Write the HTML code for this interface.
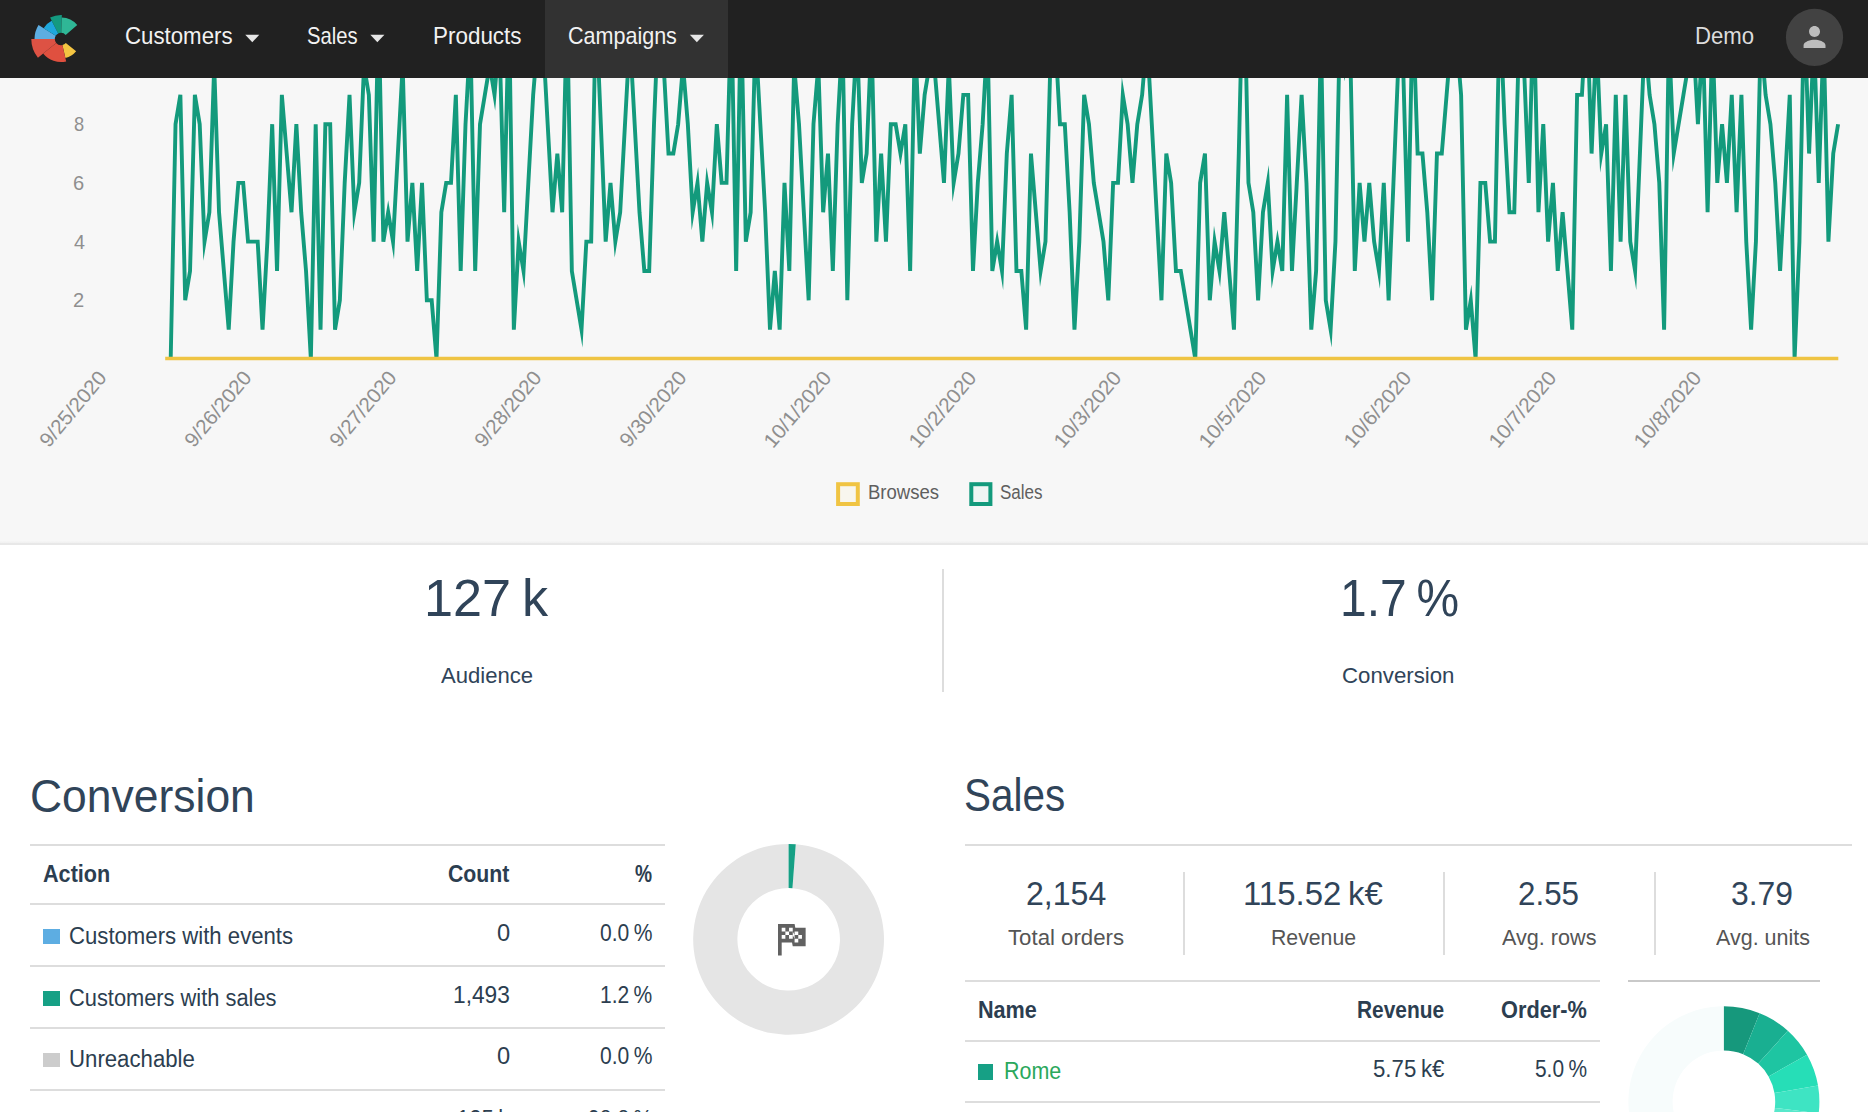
<!DOCTYPE html>
<html lang="en"><head><meta charset="utf-8"><title>Campaign</title>
<style>
html,body{margin:0;padding:0;}
body{width:1868px;height:1112px;overflow:hidden;background:#fff;position:relative;font-family:"Liberation Sans", sans-serif;}
.t{position:absolute;white-space:nowrap;line-height:1;transform-origin:0 0;}
.r{position:absolute;}
svg{position:absolute;left:0;top:0;overflow:hidden;}
#chartbg{position:absolute;left:0;top:0;width:1868px;height:543.4px;background:linear-gradient(#f7f7f7,#f7f7f7 540.6px,#efefef 543.4px);border-bottom:2px solid #e8e8e8;}
#nav{position:absolute;left:0;top:0;width:1868px;height:78.2px;background:#212121;}
#act{position:absolute;left:545px;top:0;width:182.5px;height:78.2px;background:#323232;}
</style></head><body>
<div id="chartbg"></div>
<svg width="1868" height="1112" viewBox="0 0 1868 1112">
<polyline points="170.7,359 175.53,124.2 180.37,94.85 185.2,300.3 190.03,270.95 194.86,94.85 199.7,124.2 204.53,241.6 209.36,212.25 214.2,65.5 219.03,212.25 223.86,270.95 228.7,329.65 233.53,241.6 238.36,182.9 243.19,182.9 248.03,241.6 252.86,241.6 257.69,241.6 262.53,329.65 267.36,241.6 272.19,124.2 277.03,270.95 281.86,94.85 286.69,153.55 291.52,212.25 296.36,124.2 301.19,212.25 306.02,270.95 310.86,359 315.69,124.2 320.52,329.65 325.36,124.2 330.19,124.2 335.02,329.65 339.86,300.3 344.69,182.9 349.52,94.85 354.35,212.25 359.19,182.9 364.02,65.5 368.85,94.85 373.69,241.6 378.52,6.8 383.35,241.6 388.19,212.25 393.02,241.6 397.85,153.55 402.68,65.5 407.52,241.6 412.35,182.9 417.18,270.95 422.02,182.9 426.85,300.3 431.68,300.3 436.51,359 441.35,212.25 446.18,182.9 451.01,182.9 455.85,94.85 460.68,270.95 465.51,124.2 470.35,36.15 475.18,270.95 480.01,124.2 484.85,94.85 489.68,65.5 494.51,94.85 499.34,36.15 504.18,212.25 509.01,6.8 513.84,329.65 518.68,241.6 523.51,270.95 528.34,182.9 533.17,94.85 538.01,36.15 542.84,36.15 547.67,124.2 552.51,212.25 557.34,153.55 562.17,212.25 567.01,6.8 571.84,270.95 576.67,300.3 581.5,329.65 586.34,241.6 591.17,241.6 596,6.8 600.84,124.2 605.67,241.6 610.5,182.9 615.34,241.6 620.17,212.25 625,124.2 629.84,36.15 634.67,124.2 639.5,212.25 644.33,270.95 649.17,270.95 654,124.2 658.83,6.8 663.67,65.5 668.5,153.55 673.33,153.55 678.16,124.2 683,65.5 687.83,124.2 692.66,212.25 697.5,182.9 702.33,241.6 707.16,182.9 712,212.25 716.83,124.2 721.66,182.9 726.5,182.9 731.33,6.8 736.16,270.95 740.99,6.8 745.83,241.6 750.66,212.25 755.49,36.15 760.33,124.2 765.16,212.25 769.99,329.65 774.83,270.95 779.66,329.65 784.49,182.9 789.32,270.95 794.16,65.5 798.99,124.2 803.82,212.25 808.66,300.3 813.49,124.2 818.32,65.5 823.15,212.25 827.99,153.55 832.82,270.95 837.65,124.2 842.49,36.15 847.32,300.3 852.15,124.2 856.99,36.15 861.82,182.9 866.65,153.55 871.49,36.15 876.32,241.6 881.15,153.55 885.98,241.6 890.82,124.2 895.65,124.2 900.48,153.55 905.32,124.2 910.15,270.95 914.98,36.15 919.82,153.55 924.65,94.85 929.48,65.5 934.31,65.5 939.15,124.2 943.98,182.9 948.81,65.5 953.65,182.9 958.48,153.55 963.31,94.85 968.14,94.85 972.98,270.95 977.81,182.9 982.64,124.2 987.48,36.15 992.31,270.95 997.14,241.6 1001.98,270.95 1006.81,153.55 1011.64,94.85 1016.47,270.95 1021.31,270.95 1026.14,329.65 1030.97,153.55 1035.81,212.25 1040.64,270.95 1045.47,241.6 1050.31,65.5 1055.14,36.15 1059.97,124.2 1064.81,124.2 1069.64,212.25 1074.47,329.65 1079.3,241.6 1084.14,94.85 1088.97,124.2 1093.8,182.9 1098.64,212.25 1103.47,241.6 1108.3,300.3 1113.13,182.9 1117.97,182.9 1122.8,94.85 1127.63,124.2 1132.47,182.9 1137.3,124.2 1142.13,94.85 1146.97,36.15 1151.8,124.2 1156.63,212.25 1161.46,300.3 1166.3,153.55 1171.13,182.9 1175.96,270.95 1180.8,270.95 1185.63,300.3 1190.46,329.65 1195.3,359 1200.13,182.9 1204.96,153.55 1209.8,300.3 1214.63,241.6 1219.46,270.95 1224.29,212.25 1229.13,270.95 1233.96,329.65 1238.79,153.55 1243.63,-51.9 1248.46,182.9 1253.29,212.25 1258.12,300.3 1262.96,212.25 1267.79,182.9 1272.62,270.95 1277.46,241.6 1282.29,270.95 1287.12,94.85 1291.96,270.95 1296.79,182.9 1301.62,94.85 1306.46,182.9 1311.29,329.65 1316.12,270.95 1320.95,36.15 1325.79,300.3 1330.62,329.65 1335.45,241.6 1340.29,6.8 1345.12,65.5 1349.95,36.15 1354.79,270.95 1359.62,182.9 1364.45,241.6 1369.28,182.9 1374.12,241.6 1378.95,270.95 1383.78,182.9 1388.62,300.3 1393.45,182.9 1398.28,65.5 1403.12,65.5 1407.95,241.6 1412.78,6.8 1417.61,153.55 1422.45,153.55 1427.28,212.25 1432.11,300.3 1436.95,153.55 1441.78,153.55 1446.61,94.85 1451.45,36.15 1456.28,36.15 1461.11,94.85 1465.94,329.65 1470.78,300.3 1475.61,359 1480.44,182.9 1485.28,182.9 1490.11,241.6 1494.94,241.6 1499.78,6.8 1504.61,124.2 1509.44,212.25 1514.27,212.25 1519.11,36.15 1523.94,65.5 1528.77,182.9 1533.61,6.8 1538.44,212.25 1543.27,124.2 1548.11,241.6 1552.94,182.9 1557.77,270.95 1562.6,212.25 1567.44,270.95 1572.27,329.65 1577.1,94.85 1581.94,94.85 1586.77,6.8 1591.6,153.55 1596.44,36.15 1601.27,153.55 1606.1,124.2 1610.93,270.95 1615.77,94.85 1620.6,241.6 1625.43,94.85 1630.27,241.6 1635.1,270.95 1639.93,153.55 1644.77,36.15 1649.6,94.85 1654.43,124.2 1659.26,182.9 1664.1,329.65 1668.93,36.15 1673.76,153.55 1678.6,124.2 1683.43,94.85 1688.26,65.5 1693.1,36.15 1697.93,124.2 1702.76,36.15 1707.59,212.25 1712.43,36.15 1717.26,182.9 1722.09,124.2 1726.93,182.9 1731.76,94.85 1736.59,212.25 1741.43,94.85 1746.26,241.6 1751.09,329.65 1755.92,241.6 1760.76,36.15 1765.59,94.85 1770.42,124.2 1775.26,182.9 1780.09,270.95 1784.92,182.9 1789.76,94.85 1794.59,359 1799.42,241.6 1804.25,6.8 1809.09,153.55 1813.92,36.15 1818.75,182.9 1823.59,36.15 1828.42,241.6 1833.25,153.55 1838.09,124.2" fill="none" stroke="#139a7c" stroke-width="3.9" stroke-linejoin="miter" stroke-miterlimit="10"/>
<path d="M165.2,358.5H1838.3" stroke="#efc443" stroke-width="3.5" fill="none"/>
<rect x="838.1" y="484.2" width="19.7" height="19.8" fill="#f8f6ee" stroke="#f0c443" stroke-width="4"/>
<rect x="971.3" y="484.2" width="19.1" height="19.8" fill="#eef5f3" stroke="#139a7c" stroke-width="4"/>
<path d="M795.75,844.17A95.4,95.4 0 1 1 788.60,843.90L788.60,888.00A51.3,51.3 0 1 0 792.45,888.14Z" fill="#e5e5e5"/><path d="M788.60,843.90A95.4,95.4 0 0 1 795.75,844.17L792.45,888.14A51.3,51.3 0 0 0 788.60,888.00Z" fill="#16a085"/>
<g transform="translate(768.8,916.7) scale(1.842)"><path d="M14.4,6H20V16H13L12.6,14H7V21H5V4H14L14.4,6M14,14H16V12H18V10H16V8H14V10L13,8V6H11V8H9V6H7V8H9V10H7V12H9V10H11V12H13V10L14,12V14M11,10V8H13V10H11M14,10H16V12H14V10Z" fill="#616161"/></g>
<path d="M1801.16,1157.83A95.5,95.5 0 1 1 1723.73,1006.20L1723.81,1050.40A51.3,51.3 0 1 0 1765.40,1131.85Z" fill="#f7fcfc"/><path d="M1723.90,1006.20A95.5,95.5 0 0 1 1759.67,1013.15L1743.12,1054.14A51.3,51.3 0 0 0 1723.90,1050.40Z" fill="#16987c"/><path d="M1759.67,1013.15A95.5,95.5 0 0 1 1787.80,1030.73L1758.23,1063.58A51.3,51.3 0 0 0 1743.12,1054.14Z" fill="#19af91"/><path d="M1787.80,1030.73A95.5,95.5 0 0 1 1807.02,1054.67L1768.55,1076.44A51.3,51.3 0 0 0 1758.23,1063.58Z" fill="#1ec5a2"/><path d="M1807.02,1054.67A95.5,95.5 0 0 1 1818.03,1085.61L1774.47,1093.06A51.3,51.3 0 0 0 1768.55,1076.44Z" fill="#26deb7"/><path d="M1818.03,1085.61A95.5,95.5 0 0 1 1818.69,1113.34L1774.82,1107.95A51.3,51.3 0 0 0 1774.47,1093.06Z" fill="#3ee4c3"/><path d="M1818.69,1113.34A95.5,95.5 0 0 1 1812.45,1137.47L1771.46,1120.92A51.3,51.3 0 0 0 1774.82,1107.95Z" fill="#58e8cb"/><path d="M1812.45,1137.47A95.5,95.5 0 0 1 1801.16,1157.83L1765.40,1131.85A51.3,51.3 0 0 0 1771.46,1120.92Z" fill="#72ecd3"/>
</svg>
<span class="t" style="left:12.25px;top:364px;font-size:20.3px;color:#8f8f8f;transform-origin:89.95px 10px;transform:rotate(-50deg) scaleX(1.0150);">9/25/2020</span><span class="t" style="left:157.27px;top:364px;font-size:20.3px;color:#8f8f8f;transform-origin:89.95px 10px;transform:rotate(-50deg) scaleX(1.0150);">9/26/2020</span><span class="t" style="left:302.29px;top:364px;font-size:20.3px;color:#8f8f8f;transform-origin:89.95px 10px;transform:rotate(-50deg) scaleX(1.0150);">9/27/2020</span><span class="t" style="left:447.31px;top:364px;font-size:20.3px;color:#8f8f8f;transform-origin:89.95px 10px;transform:rotate(-50deg) scaleX(1.0150);">9/28/2020</span><span class="t" style="left:592.33px;top:364px;font-size:20.3px;color:#8f8f8f;transform-origin:89.95px 10px;transform:rotate(-50deg) scaleX(1.0150);">9/30/2020</span><span class="t" style="left:737.35px;top:364px;font-size:20.3px;color:#8f8f8f;transform-origin:89.95px 10px;transform:rotate(-50deg) scaleX(1.0265);">10/1/2020</span><span class="t" style="left:882.37px;top:364px;font-size:20.3px;color:#8f8f8f;transform-origin:89.95px 10px;transform:rotate(-50deg) scaleX(1.0265);">10/2/2020</span><span class="t" style="left:1027.39px;top:364px;font-size:20.3px;color:#8f8f8f;transform-origin:89.95px 10px;transform:rotate(-50deg) scaleX(1.0265);">10/3/2020</span><span class="t" style="left:1172.41px;top:364px;font-size:20.3px;color:#8f8f8f;transform-origin:89.95px 10px;transform:rotate(-50deg) scaleX(1.0265);">10/5/2020</span><span class="t" style="left:1317.43px;top:364px;font-size:20.3px;color:#8f8f8f;transform-origin:89.95px 10px;transform:rotate(-50deg) scaleX(1.0265);">10/6/2020</span><span class="t" style="left:1462.45px;top:364px;font-size:20.3px;color:#8f8f8f;transform-origin:89.95px 10px;transform:rotate(-50deg) scaleX(1.0265);">10/7/2020</span><span class="t" style="left:1607.47px;top:364px;font-size:20.3px;color:#8f8f8f;transform-origin:89.95px 10px;transform:rotate(-50deg) scaleX(1.0265);">10/8/2020</span>
<div id="nav"><div id="act"></div></div>
<svg width="1868" height="79" viewBox="0 0 1868 79">
<path d="M50.10,17.62A24.0,24.0 0 0 1 61.84,15.01L61.22,32.80A6.2,6.2 0 0 0 58.19,33.48Z" fill="#149a80"/><path d="M61.75,17.51A21.5,21.5 0 0 1 77.23,24.89L65.68,34.93A6.2,6.2 0 0 0 61.22,32.80Z" fill="#2fb796"/><path d="M76.15,51.27A19.5,19.5 0 0 1 65.39,58.00L62.39,45.04A6.2,6.2 0 0 0 65.82,42.90Z" fill="#f4c542"/><path d="M66.17,61.41A23.0,23.0 0 0 1 43.13,53.47L56.18,42.90A6.2,6.2 0 0 0 62.39,45.04Z" fill="#e0503f"/><path d="M37.92,57.69A29.7,29.7 0 0 1 31.30,39.00L54.80,39.00A6.2,6.2 0 0 0 56.18,42.90Z" fill="#dd5244"/><path d="M34.50,39.00A26.5,26.5 0 0 1 38.53,24.96L55.74,35.71A6.2,6.2 0 0 0 54.80,39.00Z" fill="#5dade2"/><path d="M43.62,28.14A20.5,20.5 0 0 1 51.69,20.73L58.19,33.48A6.2,6.2 0 0 0 55.74,35.71Z" fill="#1ea7dc"/>
<path d="M245.3,34.8H259.3L252.3,42.2Z" fill="#e6e6e6"/><path d="M370.3,34.8H384.4L377.35,42.2Z" fill="#e6e6e6"/><path d="M689.8,34.8H703.9L696.8499999999999,42.2Z" fill="#e6e6e6"/>
<circle cx="1814.5" cy="37.3" r="28.6" fill="#424242"/>
<g transform="translate(1798.1,20.6) scale(1.37)"><path d="M12 12c2.21 0 4-1.79 4-4s-1.79-4-4-4-4 1.79-4 4 1.79 4 4 4zm0 2c-2.67 0-8 1.34-8 4v2h16v-2c0-2.66-5.33-4-8-4z" fill="#bdbdbd"/></g>
</svg>
<div class="r" style="left:30.3px;top:843.5px;width:634.6px;height:2px;background:#dddddd"></div><div class="r" style="left:30.3px;top:903.3px;width:634.6px;height:2px;background:#dddddd"></div><div class="r" style="left:30.3px;top:965px;width:634.6px;height:2px;background:#dddddd"></div><div class="r" style="left:30.3px;top:1026.9px;width:634.6px;height:2px;background:#dddddd"></div><div class="r" style="left:30.3px;top:1089px;width:634.6px;height:2px;background:#dddddd"></div><div class="r" style="left:965.3px;top:843.5px;width:886.6px;height:2px;background:#dddddd"></div><div class="r" style="left:1182.9px;top:872px;width:2px;height:82.5px;background:#dddddd"></div><div class="r" style="left:1442.8px;top:872px;width:2px;height:82.5px;background:#dddddd"></div><div class="r" style="left:1653.9px;top:872px;width:2px;height:82.5px;background:#dddddd"></div><div class="r" style="left:965.3px;top:979.9px;width:634.7px;height:2px;background:#dddddd"></div><div class="r" style="left:965.3px;top:1039.5px;width:634.7px;height:2px;background:#dddddd"></div><div class="r" style="left:965.3px;top:1101.3px;width:634.7px;height:2px;background:#dddddd"></div><div class="r" style="left:1628.1px;top:980px;width:191.5px;height:2px;background:#c9c9c9"></div><div class="r" style="left:941.95px;top:568.6px;width:2.2px;height:123.9px;background:#dddddd"></div><div class="r" style="left:42.7px;top:929.3px;width:17.2px;height:14.7px;background:#5dade2"></div><div class="r" style="left:42.7px;top:990.9px;width:17.2px;height:14.7px;background:#16a085"></div><div class="r" style="left:42.7px;top:1052.6px;width:17.2px;height:14.6px;background:#cccccc"></div><div class="r" style="left:978.3px;top:1063.9px;width:14.8px;height:16px;background:#16a085"></div>
<span class="t" style="left:125.24px;top:25.3px;font-size:23.2px;color:#f2f2f2;transform:scaleX(0.9592);">Customers</span><span class="t" style="left:306.93px;top:25.3px;font-size:23.2px;color:#f2f2f2;transform:scaleX(0.8722);">Sales</span><span class="t" style="left:432.73px;top:25.3px;font-size:23.2px;color:#f2f2f2;transform:scaleX(0.9676);">Products</span><span class="t" style="left:568.07px;top:25.3px;font-size:23.2px;color:#f2f2f2;transform:scaleX(0.9283);">Campaigns</span><span class="t" style="left:1695.05px;top:25.4px;font-size:23.4px;color:#dcdcdc;transform:scaleX(0.9481);">Demo</span><span class="t" style="left:73.9px;top:114px;font-size:20.3px;color:#8f8f8f;transform:scaleX(0.9000);">8</span><span class="t" style="left:72.91px;top:172.5px;font-size:20.3px;color:#8f8f8f;transform:scaleX(0.9900);">6</span><span class="t" style="left:73.5px;top:231.5px;font-size:20.3px;color:#8f8f8f;transform:scaleX(0.9727);">4</span><span class="t" style="left:72.91px;top:290px;font-size:20.3px;color:#8f8f8f;transform:scaleX(0.9900);">2</span><span class="t" style="left:867.67px;top:482.3px;font-size:20px;color:#5f5f5f;transform:scaleX(0.9275);">Browses</span><span class="t" style="left:1000.3px;top:482.3px;font-size:20px;color:#5f5f5f;transform:scaleX(0.8515);">Sales</span><span class="t" style="left:423.63px;top:571.7px;font-size:52.6px;color:#304459;transform:scaleX(0.9919);word-spacing:-0.07em;">127 k</span><span class="t" style="left:1339.56px;top:571.7px;font-size:52.6px;color:#304459;transform:scaleX(0.9109);word-spacing:-0.07em;">1.7 %</span><span class="t" style="left:440.5px;top:664.4px;font-size:22.8px;color:#304459;transform:scaleX(0.9684);">Audience</span><span class="t" style="left:1341.92px;top:664.4px;font-size:22.8px;color:#304459;transform:scaleX(0.9751);">Conversion</span><span class="t" style="left:29.87px;top:772.5px;font-size:46px;color:#304459;transform:scaleX(0.9663);">Conversion</span><span class="t" style="left:964.24px;top:772.2px;font-size:46px;color:#304459;transform:scaleX(0.8789);">Sales</span><span class="t" style="left:43.2px;top:863.1px;font-size:23.4px;color:#2c3e50;transform:scaleX(0.9248);font-weight:700;">Action</span><span class="t" style="left:447.7px;top:863px;font-size:23.4px;color:#2c3e50;transform:scaleX(0.9091);font-weight:700;">Count</span><span class="t" style="left:634.8px;top:863px;font-size:23.4px;color:#2c3e50;transform:scaleX(0.8190);font-weight:700;">%</span><span class="t" style="left:69.14px;top:925px;font-size:23.1px;color:#2c3e50;transform:scaleX(0.9593);">Customers with events</span><span class="t" style="left:69.15px;top:986.6px;font-size:23.1px;color:#2c3e50;transform:scaleX(0.9453);">Customers with sales</span><span class="t" style="left:69.14px;top:1048px;font-size:23.1px;color:#2c3e50;transform:scaleX(0.9612);">Unreachable</span><span class="t" style="left:496.6px;top:922px;font-size:23.1px;color:#2c3e50;transform:scaleX(1.0250);">0</span><span class="t" style="left:600.1px;top:922px;font-size:23.1px;color:#2c3e50;transform:scaleX(0.9121);word-spacing:-0.07em;">0.0 %</span><span class="t" style="left:453.32px;top:983.7px;font-size:23.1px;color:#2c3e50;transform:scaleX(0.9831);">1,493</span><span class="t" style="left:600.19px;top:983.7px;font-size:23.1px;color:#2c3e50;transform:scaleX(0.9105);word-spacing:-0.07em;">1.2 %</span><span class="t" style="left:496.6px;top:1045.3px;font-size:23.1px;color:#2c3e50;transform:scaleX(1.0250);">0</span><span class="t" style="left:600.1px;top:1045.3px;font-size:23.1px;color:#2c3e50;transform:scaleX(0.9121);word-spacing:-0.07em;">0.0 %</span><span class="t" style="left:456.55px;top:1107.5px;font-size:23.1px;color:#2c3e50;transform:scaleX(0.9534);word-spacing:-0.07em;">125 k</span><span class="t" style="left:588.08px;top:1107.5px;font-size:23.1px;color:#2c3e50;transform:scaleX(0.9164);word-spacing:-0.07em;">98.8 %</span><span class="t" style="left:69.14px;top:1116px;font-size:23.1px;color:#2c3e50;transform:scaleX(0.9597);">No conversion</span><span class="t" style="left:1025.84px;top:877.3px;font-size:33.3px;color:#304459;transform:scaleX(0.9633);">2,154</span><span class="t" style="left:1243.02px;top:877.3px;font-size:33.3px;color:#304459;transform:scaleX(0.9890);word-spacing:-0.07em;">115.52 k€</span><span class="t" style="left:1517.96px;top:877.3px;font-size:33.3px;color:#304459;transform:scaleX(0.9417);">2.55</span><span class="t" style="left:1731.44px;top:877.3px;font-size:33.3px;color:#304459;transform:scaleX(0.9569);">3.79</span><span class="t" style="left:1007.9px;top:926.2px;font-size:22.8px;color:#555555;transform:scaleX(0.9747);">Total orders</span><span class="t" style="left:1271.17px;top:926.2px;font-size:22.8px;color:#555555;transform:scaleX(0.9322);">Revenue</span><span class="t" style="left:1502.2px;top:926.2px;font-size:22.8px;color:#555555;transform:scaleX(0.9479);">Avg. rows</span><span class="t" style="left:1715.7px;top:926.2px;font-size:22.8px;color:#555555;transform:scaleX(0.9427);">Avg. units</span><span class="t" style="left:977.88px;top:999.4px;font-size:23.4px;color:#2c3e50;transform:scaleX(0.9235);font-weight:700;">Name</span><span class="t" style="left:1356.91px;top:998.9px;font-size:23.4px;color:#2c3e50;transform:scaleX(0.8933);font-weight:700;">Revenue</span><span class="t" style="left:1500.5px;top:998.9px;font-size:23.4px;color:#2c3e50;transform:scaleX(0.9299);font-weight:700;">Order-%</span><span class="t" style="left:1004.48px;top:1060.4px;font-size:23.4px;color:#2ba85c;transform:scaleX(0.9174);">Rome</span><span class="t" style="left:1372.5px;top:1057.7px;font-size:23.1px;color:#2c3e50;transform:scaleX(0.9624);word-spacing:-0.07em;">5.75 k€</span><span class="t" style="left:1535px;top:1057.7px;font-size:23.1px;color:#2c3e50;transform:scaleX(0.9051);word-spacing:-0.07em;">5.0 %</span>
</body></html>
